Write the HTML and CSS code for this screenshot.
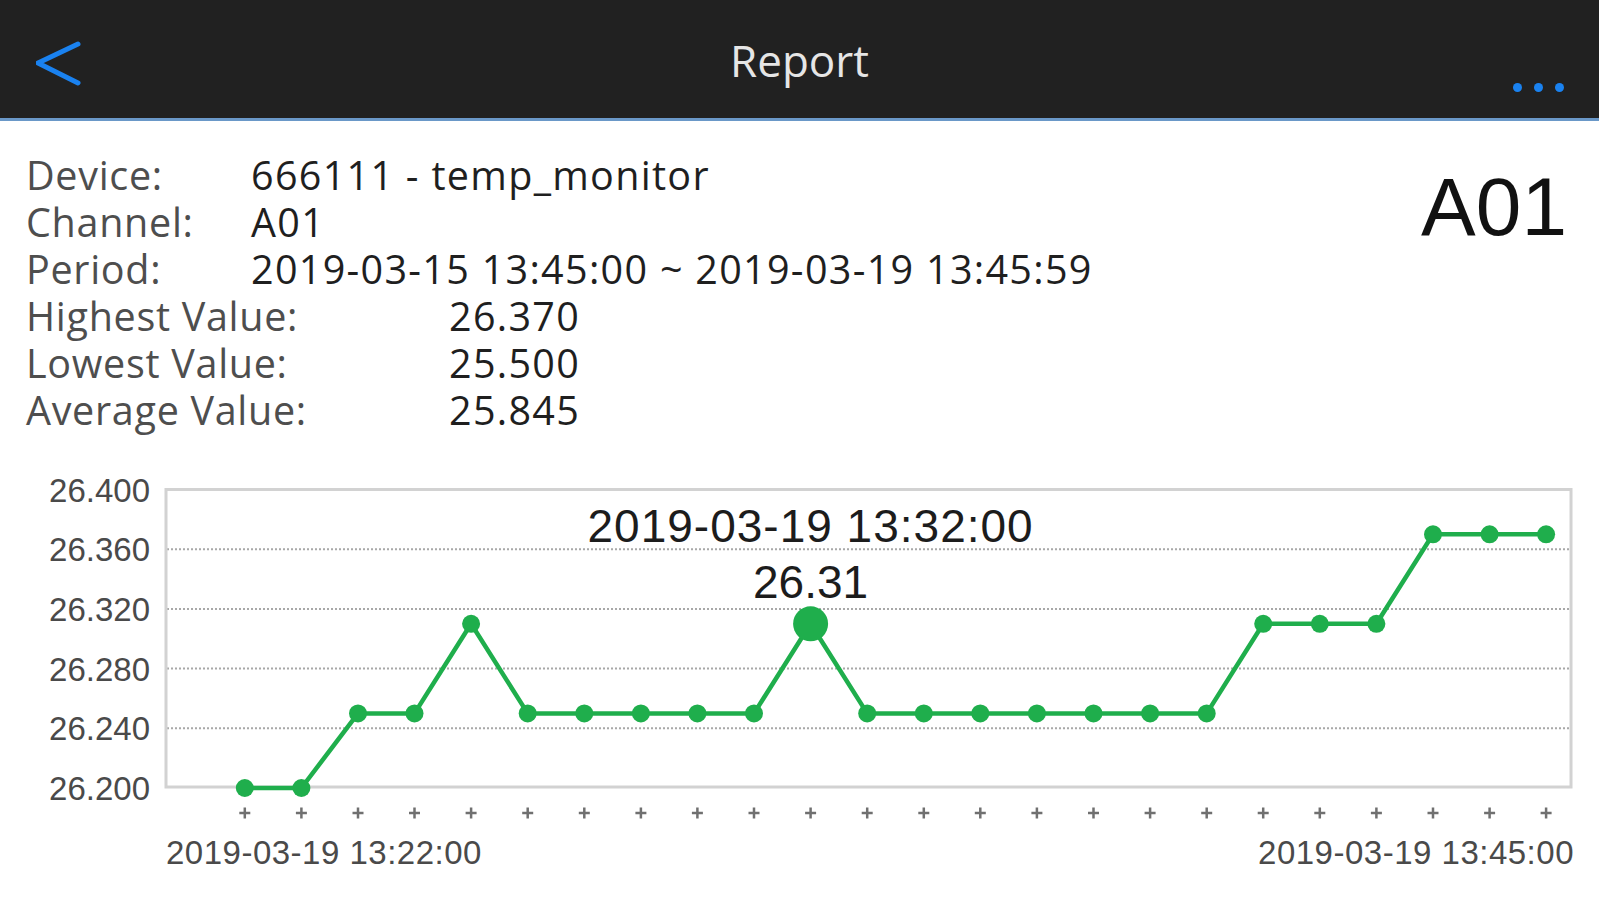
FILE: index.html
```html
<!DOCTYPE html>
<html>
<head>
<meta charset="utf-8">
<link rel="stylesheet" href="styles.css">
</head>
<body>
<header class="topbar">
  <button class="back" aria-label="Back">
    <svg width="60" height="60" viewBox="0 0 60 60"><polyline points="42,7 2,26 42,46" fill="none" stroke="#1a82f0" stroke-width="5" stroke-linecap="round" stroke-linejoin="round"/></svg>
  </button>
  <h1 class="title">Report</h1>
  <button class="more" aria-label="More">
    <span class="dot"></span><span class="dot"></span><span class="dot"></span>
  </button>
</header>

<section class="info">
  <div class="details">
    <div class="row"><span class="label">Device:</span><span class="value">666111 - temp_monitor</span></div>
    <div class="row"><span class="label">Channel:</span><span class="value">A01</span></div>
    <div class="row"><span class="label">Period:</span><span class="value">2019-03-15 13:45:00 ~ 2019-03-19 13:45:59</span></div>
    <div class="row stat"><span class="label">Highest Value:</span><span class="value">26.370</span></div>
    <div class="row stat"><span class="label">Lowest Value:</span><span class="value">25.500</span></div>
    <div class="row stat"><span class="label">Average Value:</span><span class="value">25.845</span></div>
  </div>
  <div class="channel">A01</div>
</section>

<section class="chart">
  <svg width="1599" height="440" viewBox="0 460 1599 440">
    <g class="ylabels">
      <text x="150" y="501.5">26.400</text>
      <text x="150" y="561.2">26.360</text>
      <text x="150" y="620.9">26.320</text>
      <text x="150" y="680.6">26.280</text>
      <text x="150" y="740.3">26.240</text>
      <text x="150" y="800">26.200</text>
    </g>
    <g class="grid">
      <line x1="167" y1="549.2" x2="1571" y2="549.2"/>
      <line x1="167" y1="608.9" x2="1571" y2="608.9"/>
      <line x1="167" y1="668.6" x2="1571" y2="668.6"/>
      <line x1="167" y1="728.3" x2="1571" y2="728.3"/>
    </g>
    <rect class="frame" x="166" y="489.5" width="1405" height="297.5"/>
    <polyline class="series" points="244.8,788 301.4,788 358,713.4 414.5,713.4 471.1,623.8 527.7,713.4 584.3,713.4 640.9,713.4 697.4,713.4 754,713.4 810.6,623.8 867.2,713.4 923.8,713.4 980.3,713.4 1036.9,713.4 1093.5,713.4 1150.1,713.4 1206.7,713.4 1263.2,623.8 1319.8,623.8 1376.4,623.8 1433,534.3 1489.6,534.3 1546.1,534.3"/>
    <g class="pts">
      <circle cx="244.8" cy="788" r="9"/><circle cx="301.4" cy="788" r="9"/><circle cx="358" cy="713.4" r="9"/><circle cx="414.5" cy="713.4" r="9"/><circle cx="471.1" cy="623.8" r="9"/><circle cx="527.7" cy="713.4" r="9"/><circle cx="584.3" cy="713.4" r="9"/><circle cx="640.9" cy="713.4" r="9"/><circle cx="697.4" cy="713.4" r="9"/><circle cx="754" cy="713.4" r="9"/><circle cx="810.6" cy="623.8" r="17.5"/><circle cx="867.2" cy="713.4" r="9"/><circle cx="923.8" cy="713.4" r="9"/><circle cx="980.3" cy="713.4" r="9"/><circle cx="1036.9" cy="713.4" r="9"/><circle cx="1093.5" cy="713.4" r="9"/><circle cx="1150.1" cy="713.4" r="9"/><circle cx="1206.7" cy="713.4" r="9"/><circle cx="1263.2" cy="623.8" r="9"/><circle cx="1319.8" cy="623.8" r="9"/><circle cx="1376.4" cy="623.8" r="9"/><circle cx="1433" cy="534.3" r="9"/><circle cx="1489.6" cy="534.3" r="9"/><circle cx="1546.1" cy="534.3" r="9"/>
    </g>
    <g class="ticks">
      <path d="M239.3 813h11M244.8 807.5v11 M295.9 813h11M301.4 807.5v11 M352.5 813h11M358 807.5v11 M409 813h11M414.5 807.5v11 M465.6 813h11M471.1 807.5v11 M522.2 813h11M527.7 807.5v11 M578.8 813h11M584.3 807.5v11 M635.4 813h11M640.9 807.5v11 M691.9 813h11M697.4 807.5v11 M748.5 813h11M754 807.5v11 M805.1 813h11M810.6 807.5v11 M861.7 813h11M867.2 807.5v11 M918.3 813h11M923.8 807.5v11 M974.8 813h11M980.3 807.5v11 M1031.4 813h11M1036.9 807.5v11 M1088 813h11M1093.5 807.5v11 M1144.6 813h11M1150.1 807.5v11 M1201.2 813h11M1206.7 807.5v11 M1257.7 813h11M1263.2 807.5v11 M1314.3 813h11M1319.8 807.5v11 M1370.9 813h11M1376.4 807.5v11 M1427.5 813h11M1433 807.5v11 M1484.1 813h11M1489.6 807.5v11 M1540.6 813h11M1546.1 807.5v11"/>
    </g>
    <g class="xlabels">
      <text x="166" y="863.5">2019-03-19 13:22:00</text>
      <text class="end" x="1574" y="863.5">2019-03-19 13:45:00</text>
    </g>
    <g class="callout">
      <text class="when" x="810.6" y="541.7">2019-03-19 13:32:00</text>
      <text x="810.6" y="598">26.31</text>
    </g>
  </svg>
</section>
</body>
</html>
```

FILE: styles.css
```css
* { box-sizing: border-box; }

html, body {
  margin: 0;
  padding: 0;
  background: #ffffff;
  width: 1599px;
  height: 900px;
  overflow: hidden;
}

body {
  font-family: "Open Sans", "Liberation Sans", sans-serif;
}

.topbar {
  height: 121px;
  background: #212121;
  border-bottom: 3px solid #6a98c8;
  display: flex;
  align-items: center;
  justify-content: space-between;
  padding: 0 20px 0 36px;
  position: relative;
}

.back, .more {
  background: none;
  border: 0;
  padding: 0;
  margin: 0;
  cursor: pointer;
}

.back {
  width: 60px;
  height: 60px;
  margin-top: 16px;
  display: block;
}

.back svg { display: block; }

.title {
  margin: 0;
  font-family: "Open Sans", "Liberation Sans", sans-serif;
  font-size: 44px;
  font-weight: 400;
  color: #e6e6e6;
  line-height: 60px;
  position: absolute;
  left: 0;
  right: 0;
  top: 30px;
  text-align: center;
  pointer-events: none;
}

.more {
  display: flex;
  gap: 12px;
  margin-top: 56px;
  margin-right: 15px;
}

.dot {
  width: 9px;
  height: 9px;
  border-radius: 50%;
  background: #1a82f0;
  display: block;
}

.info {
  height: 339px;
  display: flex;
  justify-content: space-between;
  align-items: flex-start;
  padding: 31px 32px 0 26px;
}

.details {
  display: flex;
  flex-direction: column;
}

.row {
  display: flex;
  height: 47px;
  line-height: 47px;
  font-size: 39.5px;
  white-space: nowrap;
}

.label {
  color: #4e4e4e;
  width: 225px;
  flex: none;
  letter-spacing: 0.7px;
}

.row.stat .label { width: 423px; }

.value {
  color: #1f1f1f;
  letter-spacing: 1.3px;
}

.channel {
  font-family: "Liberation Sans", Arial, sans-serif;
  font-size: 82px;
  line-height: 82px;
  color: #111;
  margin-top: 14px;
}

.chart svg { display: block; }

.ylabels text {
  font-family: "Liberation Sans", Arial, sans-serif;
  font-size: 33px;
  fill: #4a4a4a;
  text-anchor: end;
}

.grid line {
  stroke: #a8a8a8;
  stroke-width: 2;
  stroke-dasharray: 2 2;
}

.frame {
  fill: none;
  stroke: #d2d2d2;
  stroke-width: 3;
}

.series {
  fill: none;
  stroke: #1fae4c;
  stroke-width: 4.5;
  stroke-linejoin: round;
}

.pts circle { fill: #1fae4c; }

.ticks path {
  stroke: #707070;
  stroke-width: 2.5;
  fill: none;
}

.xlabels text {
  font-family: "Liberation Sans", Arial, sans-serif;
  font-size: 33px;
  fill: #4a4a4a;
  letter-spacing: 0.5px;
}

.xlabels text.end { text-anchor: end; }

.callout text {
  font-family: "Liberation Sans", Arial, sans-serif;
  font-size: 46px;
  fill: #1c1c1c;
  text-anchor: middle;
}

.callout text.when { letter-spacing: 1px; }
```
